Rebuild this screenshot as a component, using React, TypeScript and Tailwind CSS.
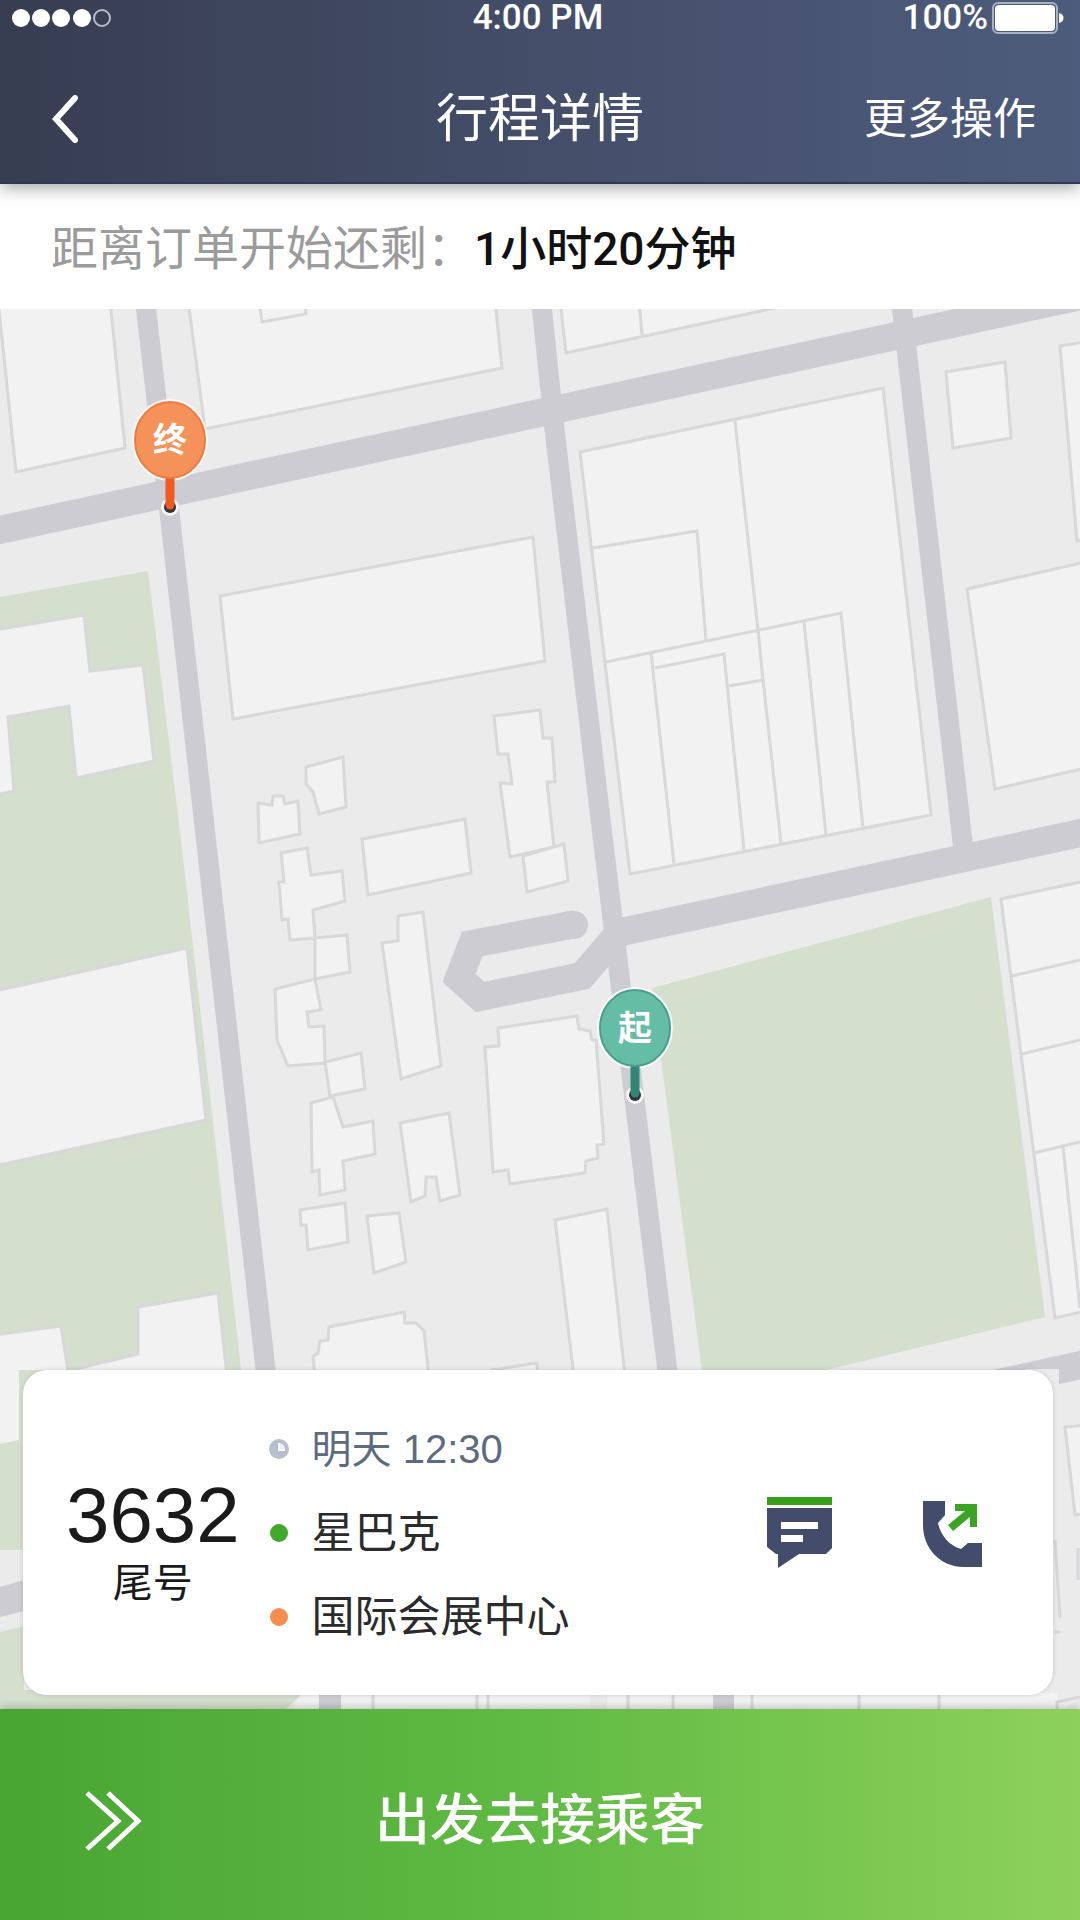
import type { ReactNode } from "react";

const greens = [
  "-5,598 148,571 181,840 241,1369 241,1400 -5,1400",
  "652,988 991,897 1045,1317 822,1371 702,1371 663,1074",
];

const buildings = [
  "-2,300 16,472 125,448 110,300",
  "188,300 205,429 502,368 495,300",
  "259,300 262,322 306,314 305,300",
  "-5,630 84,615 90,671 143,665 154,761 76,778 69,706 8,717 14,791 -5,795",
  "220,596 533,537 545,661 233,719",
  "306,767 343,757 346,807 319,814 313,792 306,784",
  "258,803 272,805 273,796 283,796 285,804 298,801 300,834 259,843",
  "362,839 465,819 471,873 368,895",
  "494,716 540,710 543,738 552,738 555,782 547,782 554,847 510,857 500,783 512,784 508,754 498,754",
  "523,856 564,844 568,881 527,892",
  "281,853 307,848 311,875 342,871 345,901 313,910 315,938 290,940 288,919 282,920 279,882 284,882",
  "315,938 347,935 350,972 315,979",
  "315,979 321,1010 307,1012 309,1027 324,1026 325,1063 288,1066 277,1040 275,989",
  "325,1062 361,1053 365,1089 330,1096",
  "311,1103 333,1097 343,1127 373,1121 375,1154 343,1161 345,1190 320,1195 319,1170 312,1172",
  "300,1210 345,1203 348,1242 308,1250 306,1225 301,1225",
  "367,1216 399,1213 406,1262 374,1273",
  "382,943 398,941 398,916 423,912 441,1066 401,1079",
  "400,1123 449,1113 460,1195 440,1201 436,1177 426,1177 425,1196 411,1202",
  "498,1028 577,1016 579,1029 590,1031 592,1040 596,1040 604,1144 597,1145 598,1158 586,1161 585,1173 510,1184 508,1170 493,1172 485,1047 499,1046",
  "555,1220 607,1209 626,1385 575,1385",
  "316,1385 313,1357 318,1353 320,1341 328,1340 329,1327 404,1312 405,1323 416,1323 424,1331 430,1385",
  "492,1370 537,1363 538,1380 492,1380",
  "-5,991 187,948 206,1120 -5,1166",
  "-5,1335 61,1326 68,1371 138,1354 138,1307 218,1293 228,1385 24,1420 5,1430 -5,1375",
  "560,300 566,353 812,300",
  "580,452 883,388 931,815 630,874",
  "946,372 1005,362 1011,438 953,448",
  "1090,341 1060,346 1077,541 1090,539",
  "1090,561 967,589 995,789 1090,767",
  "1090,880 1001,899 1055,1318 1090,1310",
];

const lotLines = [
  "M639 300 642 335",
  "M735 421 758 630 763 680 781 843",
  "M593 548 697 531 706 641",
  "M606 662 841 613 863 828",
  "M804 622 826 835",
  "M651 653 674 864",
  "M655 668 724 654 744 850",
  "M729 686 763 680",
  "M1012 976 1080 960",
  "M1022 1054 1080 1040",
  "M1034 1153 1080 1142",
  "M1063 1147 1080 1308",
];

const roads = [
  "M-10 532 1090 294",
  "M612 934 1090 831",
  "M990 1385 1090 1363",
];

const lanes = ["M145 300 169 508 206 840 269 1400", "M541 300 554 425 603 840 671 1400", "M901 300 964 855"];

const blockEdges = [373, 477, 488, 628, 673, 752, 859, 939];

type PinProps = { x: number; y: number; label: string; fill: string; edge: string; stem: string };

function Pin({ x, y, label, fill, edge, stem }: PinProps) {
  return (
    <g transform={`translate(${x} ${y})`}>
      <ellipse rx="38" ry="41" fill="#fff" opacity="0.8" />
      <circle cy="67" r="9" fill="#fff" opacity="0.8" />
      <circle cy="67" r="6" fill="#333" />
      <path d="M0 36V65" stroke={stem} strokeWidth="9" strokeLinecap="round" />
      <ellipse rx="35" ry="38" fill={fill} stroke={edge} strokeWidth="2" />
      <text y="12" textAnchor="middle" fill="#fff" className="text-[34px] font-bold">
        {label}
      </text>
    </g>
  );
}

function CityMap() {
  return (
    <svg
      viewBox="0 309 1080 1400"
      preserveAspectRatio="xMinYMin slice"
      className="absolute inset-0 h-full w-full"
      role="img"
      aria-label="地图"
    >
      <rect y="300" width="1080" height="1420" fill="#ebebeb" />
      {greens.map((p) => (
        <polygon key={p} points={p} fill="#d4dfcd" />
      ))}

      <g stroke="#d8d8da" strokeWidth="3" fill="#f2f2f2">
        {buildings.map((p) => (
          <polygon key={p} points={p} />
        ))}
        {lotLines.map((d) => (
          <path key={d} d={d} fill="none" />
        ))}
      </g>

      <g stroke="#ccccd2" fill="none">
        {roads.map((d) => (
          <path key={d} d={d} strokeWidth="28" />
        ))}
        {lanes.map((d) => (
          <path key={d} d={d} strokeWidth="20" />
        ))}
        <path d="M576 924 472 944 459 978 480 997 582 976 618 934" strokeWidth="28" />
        <path d="M570 925H574" strokeWidth="28" strokeLinecap="round" />
      </g>

      {/* area around the card */}
      <path d="M0 1385 5 1443 19 1440V1370H24V1720H0Z" fill="#ebebeb" />
      <path d="M0 1380H19V1440L0 1444Z" fill="#f2f2f2" />
      <path d="M0 1444 19 1440V1370H50V1550H0Z" fill="#d4dfcd" />
      <path d="M0 1587 24 1580V1611L0 1617Z" fill="#ccccd2" />
      <path d="M0 1632 24 1626V1690H306L285 1710H0Z" fill="#d4dfcd" />
      <rect x="1025" y="1369" width="34" height="330" fill="#ebebeb" />
      <g stroke="#d8d8da" strokeWidth="3" fill="#f2f2f2">
        <path d="M1090 1425 1065 1427 1075 1515 1090 1513" />
        <path d="M302 1693H1057V1720H285Z" stroke="none" />
        {blockEdges.map((x) => (
          <path key={x} d={`M${x} 1690V1715`} />
        ))}
        <path d="M1057 1715V1702L1080 1697" />
        <path d="M1055 1540 1060 1618M1055 1632H1060M1078 1548V1580" fill="none" />
      </g>
      <rect x="590" y="1690" width="17" height="20" fill="#ebebeb" />
      <rect x="319" y="1690" width="22" height="20" fill="#ccccd2" />
      <rect x="713" y="1690" width="21" height="20" fill="#ccccd2" />

      <Pin x={170} y={440} label="终" fill="#f59259" edge="#ee7b3f" stem="#f0591f" />
      <Pin x={635} y={1028} label="起" fill="#66bda6" edge="#46a08b" stem="#2f8674" />
    </svg>
  );
}

function StatusBar() {
  return (
    <div className="grid grid-cols-3 items-center pr-4 pl-3 font-['Roboto',sans-serif] text-[35px] leading-9 font-medium">
      <svg viewBox="0 0 100 20" className="h-5 w-[100px]" fill="#fff" aria-hidden="true">
        <circle cx="9" cy="10" r="9" />
        <circle cx="29" cy="10" r="9" />
        <circle cx="49" cy="10" r="9" />
        <circle cx="70" cy="10" r="9" />
        <circle cx="90" cy="10" r="8" fill="none" stroke="#b9bdc9" strokeWidth="2" />
      </svg>
      <span className="text-center">4:00 PM</span>
      <span className="flex items-center justify-end gap-1">
        100%
        <svg viewBox="0 0 72 32" className="h-8 w-[72px]" aria-hidden="true">
          <rect x="1" y="1" width="64" height="30" rx="5" fill="none" stroke="#a9b1c3" strokeWidth="2" />
          <rect x="3" y="3" width="60" height="26" rx="4" fill="#fff" />
          <path d="M67 11C73 12 73 20 67 21Z" fill="#fff" />
        </svg>
      </span>
    </div>
  );
}

function Header() {
  return (
    <header className="relative z-10 flex flex-col bg-linear-to-r from-[#373d51] via-[#444e69] to-[#4d5c7c] text-white shadow-[0_4px_16px_rgba(0,0,0,0.35)]">
      <StatusBar />
      <div className="grid h-[148px] grid-cols-3 items-center border-b-2 border-[#30385a] px-11 pt-5">
        <button type="button" aria-label="返回" className="justify-self-start p-2">
          <svg viewBox="0 0 26 48" className="h-12 w-[26px]" fill="none" stroke="#fff" strokeWidth="6" aria-hidden="true">
            <path d="M23 3 4 24 23 45" strokeLinecap="round" />
          </svg>
        </button>
        <h1 className="text-center text-[52px] leading-none">行程详情</h1>
        <button type="button" className="justify-self-end text-[43px] leading-none whitespace-nowrap">
          更多操作
        </button>
      </div>
    </header>
  );
}

function TripRow({ icon, children }: { icon: ReactNode; children: ReactNode }) {
  return (
    <li className="flex items-center gap-[22px]">
      {icon}
      {children}
    </li>
  );
}

function TripCard() {
  return (
    <section className="relative mr-[27px] mb-[14px] ml-[23px] flex h-[325px] items-center rounded-3xl bg-white pr-[70px] pl-[43px] shadow-[0_0_5px_rgba(0,0,0,0.15)]">
      <div className="flex flex-col items-center gap-3 pt-4 text-[#1a1a1a]">
        <strong className="text-[78px] leading-[72px] font-normal">3632</strong>
        <span className="text-[40px] leading-none">尾号</span>
      </div>
      <ul className="ml-7 flex flex-1 flex-col gap-10 text-[43px] leading-[44px] text-[#2b2b2b]">
        <TripRow
          icon={
            <svg viewBox="0 0 22 22" className="w-[22px]" aria-hidden="true">
              <circle cx="11" cy="11" r="10" fill="#b5bfce" />
              <path d="M11 5V12H17A6 6 0 0 0 11 5Z" fill="#e8edf4" />
              <path d="M11 5V12H17" stroke="#fff" strokeWidth="2" fill="none" />
            </svg>
          }
        >
          <time className="text-[40px] text-[#5d6b80]">明天 12:30</time>
        </TripRow>
        <TripRow icon={<span className="mx-[2px] size-[18px] rounded-full bg-[#3fa92a]" />}>星巴克</TripRow>
        <TripRow icon={<span className="mx-[2px] size-[18px] rounded-full bg-[#f68d4f]" />}>国际会展中心</TripRow>
      </ul>
      <div className="flex items-center gap-[90px]">
        <button type="button" aria-label="发消息">
          <svg viewBox="0 0 66 72" className="h-[72px] w-[66px]" aria-hidden="true">
            <path d="M0 0H65V8H0Z" fill="#36a01c" />
            <path d="M0 11H65V51L59 57H32L11 71V57H9L0 50Z" fill="#434d6b" />
            <path d="M14 25H51V32H14ZM14 38H36V45H14Z" fill="#fff" />
          </svg>
        </button>
        <button type="button" aria-label="打电话">
          <svg viewBox="0 0 60 72" className="h-[72px] w-[60px]" aria-hidden="true">
            <path
              d="M0 4H22V18L15 26C17 37 26 49 38 52L45 46H59V70H41C17 70 0 51 0 28Z"
              fill="#434d6b"
            />
            <path d="M32 7H54V30H47V20L30 34L25 28L42 14H32Z" fill="#3aa522" />
          </svg>
        </button>
      </div>
    </section>
  );
}

export default function App() {
  return (
    <main className="flex min-h-screen w-full flex-col bg-white font-['Liberation_Sans','Noto_Sans_CJK_SC',sans-serif]">
      <Header />
      <p className="flex h-[125px] items-center px-[51px] pt-1 text-[47px] leading-none">
        <span className="text-[#9b9b9b]">距离订单开始还剩：</span>
        <span className="font-['Roboto','Noto_Sans_CJK_SC',sans-serif] text-[46px] font-medium text-[#111]">
          1小时20分钟
        </span>
      </p>
      <div className="relative flex flex-1 flex-col justify-end overflow-hidden">
        <CityMap />
        <TripCard />
      </div>
      <button
        type="button"
        className="relative flex h-[211px] items-center justify-center bg-linear-to-r from-[#49a532] via-[#60bb44] to-[#8dd15a] pt-3 text-[55px] leading-none font-medium text-white shadow-[0_-2px_8px_rgba(0,0,0,0.2)]"
      >
        <svg
          viewBox="0 0 58 60"
          className="absolute left-[84px] h-[60px] w-[58px]"
          fill="none"
          stroke="#fff"
          strokeWidth="5"
          aria-hidden="true"
        >
          <path d="M3 2 34 30 3 58M24 2 54 30 24 58" />
        </svg>
        出发去接乘客
      </button>
    </main>
  );
}
